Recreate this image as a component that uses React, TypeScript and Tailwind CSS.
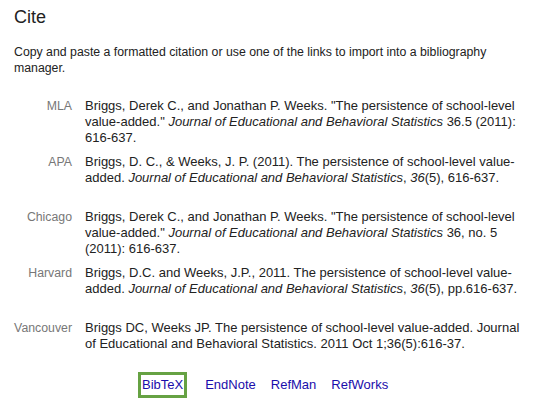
const citations = [
  {
    style: "MLA",
    lines: [
      <>Briggs, Derek C., and Jonathan P. Weeks. "The persistence of school-level</>,
      <>
        value-added." <i>Journal of Educational and Behavioral Statistics</i> 36.5 (2011):
      </>,
      <>616-637.</>,
    ],
  },
  {
    style: "APA",
    lines: [
      <>Briggs, D. C., &amp; Weeks, J. P. (2011). The persistence of school-level value-</>,
      <>
        added. <i>Journal of Educational and Behavioral Statistics</i>, <i>36</i>(5), 616-637.
      </>,
    ],
  },
  {
    style: "Chicago",
    lines: [
      <>Briggs, Derek C., and Jonathan P. Weeks. "The persistence of school-level</>,
      <>
        value-added." <i>Journal of Educational and Behavioral Statistics</i> 36, no. 5
      </>,
      <>(2011): 616-637.</>,
    ],
  },
  {
    style: "Harvard",
    lines: [
      <>Briggs, D.C. and Weeks, J.P., 2011. The persistence of school-level value-</>,
      <>
        added. <i>Journal of Educational and Behavioral Statistics</i>, <i>36</i>(5), pp.616-637.
      </>,
    ],
  },
  {
    style: "Vancouver",
    lines: [
      <>Briggs DC, Weeks JP. The persistence of school-level value-added. Journal</>,
      <>of Educational and Behavioral Statistics. 2011 Oct 1;36(5):616-37.</>,
    ],
  },
];

const exportLinks = ["BibTeX", "EndNote", "RefMan", "RefWorks"];

export default function App() {
  return (
    <div className="min-h-[416px] w-[548px] bg-white px-[14px] pt-[6px] font-['Liberation_Sans',Arial,sans-serif] text-[12.3px] leading-[16px] text-[#222]">
      <h2 className="text-[18px] leading-[22px] font-normal text-[#222]">Cite</h2>
      <p className="mt-[16px] w-[480px]">
        Copy and paste a formatted citation or use one of the links to import into a bibliography
        manager.
      </p>

      <div className="mt-[22px] flex flex-col">
        {citations.map((c, i) => (
          <div
            key={c.style}
            className={i === citations.length - 1 ? "flex items-start" : "flex min-h-[55.5px] items-start"}
          >
            <div className="w-[71px] shrink-0 pr-[13px] text-right text-[#777] whitespace-nowrap">
              {c.style}
            </div>
            <div className="flex flex-col text-[13px]">
              {c.lines.map((line, j) => (
                <span key={j} className="whitespace-nowrap">
                  {line}
                </span>
              ))}
            </div>
          </div>
        ))}
      </div>

      <div className="mt-[20px] ml-[124px] flex items-center gap-[15px] text-[13px]">
        {exportLinks.map((l, i) => (
          <a
            key={l}
            href="#"
            className={
              i === 0
                ? "mr-[3px] border-[3px] border-[#66a243] px-[1px] py-[2px] text-[#1a0dab]"
                : "py-[5px] text-[#1a0dab]"
            }
          >
            {l}
          </a>
        ))}
      </div>
    </div>
  );
}
